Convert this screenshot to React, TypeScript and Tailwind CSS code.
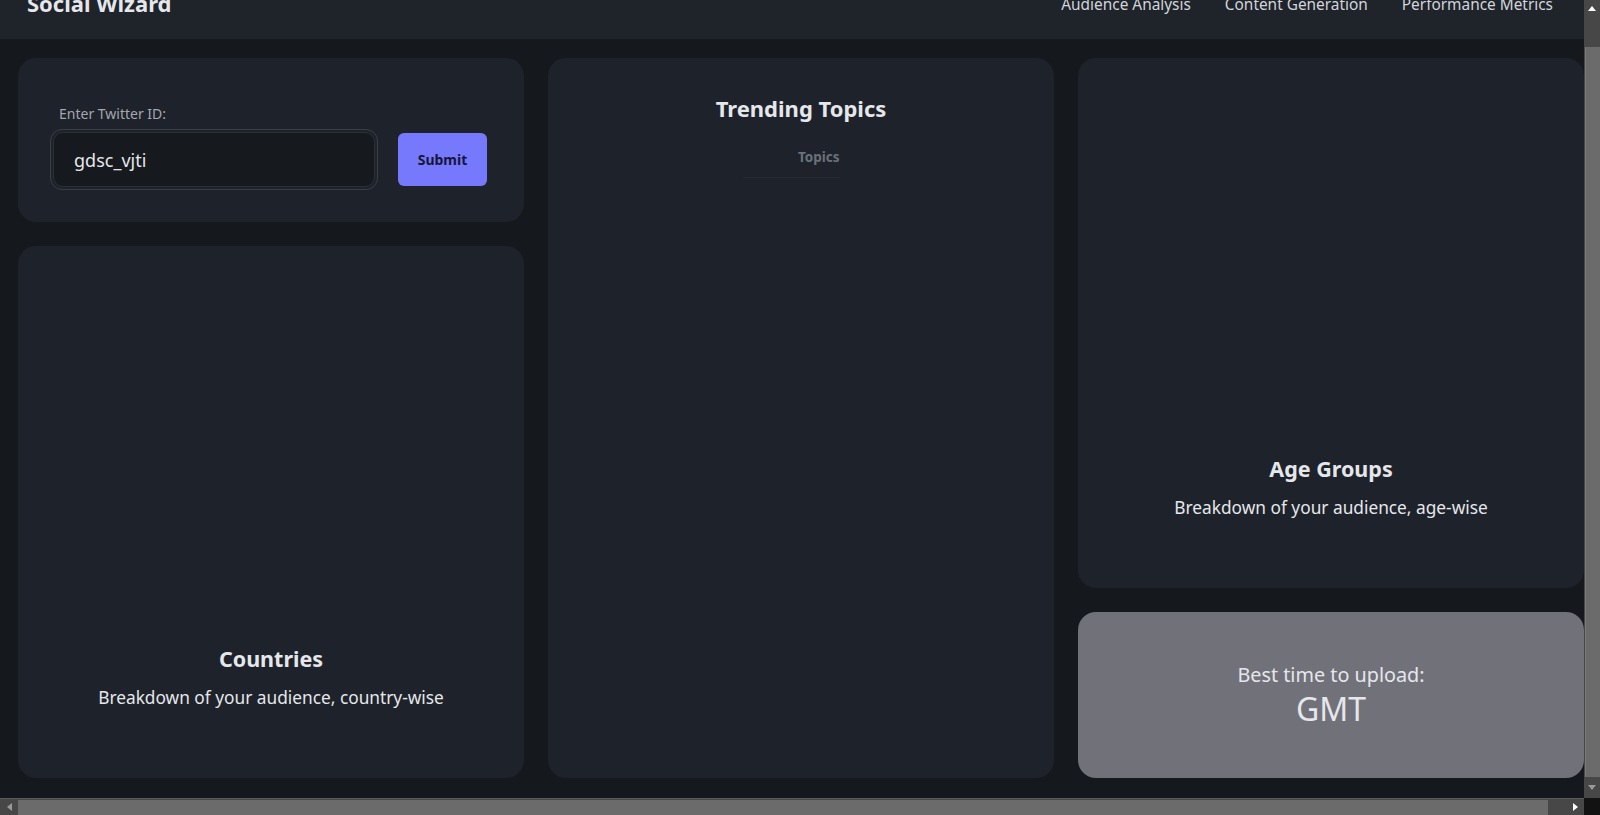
const font = { fontFamily: '"Noto Sans", "Open Sans", sans-serif' };

function ChartCard({ title, subtitle }: { title: string; subtitle: string }) {
  return (
    <div className="flex flex-1 flex-col items-center justify-end rounded-[18px] bg-[#1e222a] pb-[66px] text-center">
      <h2 className="text-[21.5px] font-bold leading-8 text-[#e5e7eb]">{title}</h2>
      <p className="mt-[9px] text-[17.3px] leading-7 text-[#e5e7eb]">{subtitle}</p>
    </div>
  );
}

// window scrollbars, as the page was captured scrolled a little
function Scrollbars() {
  return (
    <>
      <div className="fixed right-0 top-0 flex h-[798px] w-[16px] flex-col bg-[#474747]">
        <div className="flex h-[16px] items-center justify-center">
          <svg width="8" height="5" viewBox="0 0 8 5">
            <path d="M0 5 L4 0 L8 5 Z" fill="#ffffff" />
          </svg>
        </div>
        <div className="ml-[1px] mt-[31px] h-[730px] border-l border-[#7a7a7a] bg-[#6b6b6b]" />
        <div className="flex flex-1 items-center justify-center">
          <svg width="8" height="5" viewBox="0 0 8 5">
            <path d="M0 0 L4 5 L8 0 Z" fill="#9a9a9a" />
          </svg>
        </div>
      </div>
      <div className="fixed bottom-0 left-0 flex h-[17px] w-[1584px] border-t border-[#5a5a5a] bg-[#474747]">
        <div className="flex w-[18px] items-center justify-center">
          <svg width="5" height="8" viewBox="0 0 5 8">
            <path d="M5 0 L0 4 L5 8 Z" fill="#9a9a9a" />
          </svg>
        </div>
        <div className="mt-[1px] w-[1530px] bg-[#6b6b6b]" />
        <div className="flex flex-1 items-center justify-end pr-[6px]">
          <svg width="5" height="8" viewBox="0 0 5 8">
            <path d="M0 0 L5 4 L0 8 Z" fill="#ffffff" />
          </svg>
        </div>
      </div>
      <div className="fixed bottom-0 right-0 h-[17px] w-[16px] bg-[#121212]" />
    </>
  );
}

export default function App() {
  return (
    <div className="h-[815px] overflow-hidden bg-[#15181c]" style={font}>
      <div className="-mt-[34px] w-[1607px]">
        <header className="flex h-[73px] items-center justify-between bg-[#1f232a] pl-[27px] pr-[54px]">
          <h1 className="text-[22px] font-bold leading-8 text-[#e5e7eb]">Social Wizard</h1>
          <nav className="flex gap-[34px] pt-[5px] text-[15.4px] text-[#d1d5db]">
            <a>Audience Analysis</a>
            <a>Content Generation</a>
            <a>Performance Metrics</a>
          </nav>
        </header>

        <main className="flex gap-6 px-[18px] pt-[19px]">
          {/* left column */}
          <div className="flex h-[720px] w-[506px] flex-col gap-6">
            <div className="h-[164px] rounded-[18px] bg-[#1e222a] px-8 pt-[46px]">
              <label className="block pl-[9px] text-[14px] leading-5 text-[#a3a7ae]">Enter Twitter ID:</label>
              <div className="mt-[5px] flex items-center gap-5">
                <div className="w-[328px] rounded-[12px] border border-[#3a3e45] p-[2px]">
                  <input
                    defaultValue="gdsc_vjti"
                    className="h-[55px] w-full rounded-[10px] border border-[#2b2f36] bg-[#16191d] px-5 text-[18px] text-[#e5e7eb] outline-none"
                  />
                </div>
                <button className="h-[53px] w-[89px] rounded-[6px] bg-[#7779fd] text-[14px] font-bold text-[#16163a]">
                  Submit
                </button>
              </div>
            </div>
            <ChartCard title="Countries" subtitle="Breakdown of your audience, country-wise" />
          </div>

          {/* middle column */}
          <div className="flex h-[720px] w-[506px] flex-col items-center rounded-[18px] bg-[#1e222a] pt-[34px]">
            <h2 className="text-[22px] font-bold leading-8 text-[#e5e7eb]">Trending Topics</h2>
            <table className="ml-[-20px] mt-[23px] w-[97px]">
              <thead>
                <tr className="border-b border-[#252a32]">
                  <th className="pb-[10px] pl-[52px] text-right text-[13.5px] font-bold text-[#6b7079]">Topics</th>
                </tr>
              </thead>
              <tbody />
            </table>
          </div>

          {/* right column */}
          <div className="flex h-[720px] w-[506px] flex-col gap-6">
            <ChartCard title="Age Groups" subtitle="Breakdown of your audience, age-wise" />
            <div className="flex h-[166px] flex-col items-center justify-center rounded-[18px] bg-[#71717a] text-[#e5e7eb]">
              <p className="text-[19.8px] leading-7">Best time to upload:</p>
              <p className="text-[32px] leading-10">GMT</p>
            </div>
          </div>
        </main>
      </div>
      <Scrollbars />
    </div>
  );
}
